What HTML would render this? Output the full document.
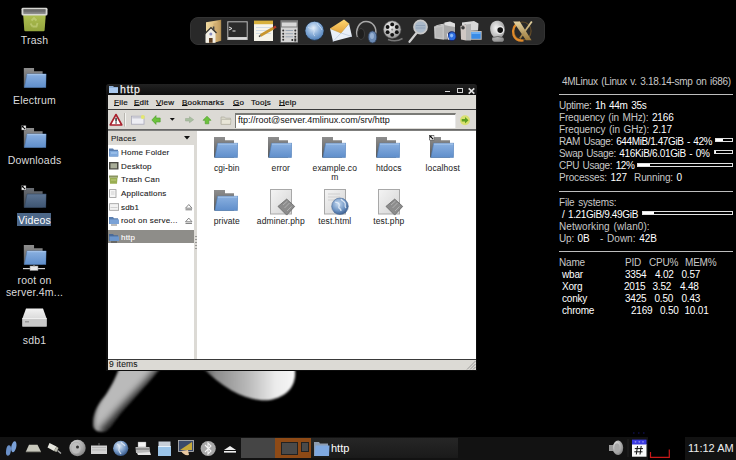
<!DOCTYPE html>
<html><head><meta charset="utf-8">
<style>
*{margin:0;padding:0;box-sizing:border-box}
html,body{width:736px;height:460px;overflow:hidden;background:#000;font-family:"Liberation Sans",sans-serif}
.a{position:absolute}
svg{position:absolute;overflow:visible}
/* desktop labels */
.dl{position:absolute;color:#dcdcdc;font-size:10.5px;line-height:12px;letter-spacing:0.2px;text-align:center;white-space:nowrap;text-shadow:1px 1px 1px #000}
/* conky */
.ck{position:absolute;font-size:10px;line-height:12px;color:#c8c8c8;white-space:nowrap;letter-spacing:-0.2px;word-spacing:1px}
.ck b{font-weight:normal;color:#fff}
.hr{position:absolute;left:559px;width:174px;height:1px;background:#bdbdbd}
.bar{position:absolute;height:4px;border:1px solid #e0e0e0}
.bar i{position:absolute;left:0;top:0;bottom:0;background:#fff}
/* window */
.win{position:absolute;left:106px;top:84px;width:371px;height:287px;background:#000}
.mt{position:absolute;font-size:8px;line-height:10px;color:#111;white-space:nowrap;letter-spacing:0.25px;-webkit-text-stroke:0.2px #111}
.mt u{text-decoration:underline;text-underline-offset:0px;text-decoration-thickness:1px}
.sb{position:absolute;font-size:8px;color:#1a1a1a;white-space:nowrap;letter-spacing:0.2px;-webkit-text-stroke:0.1px}
.fi{position:absolute;font-size:8.5px;line-height:9px;color:#2a2a2a;letter-spacing:0.1px;-webkit-text-stroke:0.05px;white-space:nowrap;text-align:center}
</style></head><body>

<!-- wallpaper shapes -->
<svg class="a" style="left:0;top:0" width="736" height="460" viewBox="0 0 736 460">
  <defs>
    <linearGradient id="lg1" gradientUnits="userSpaceOnUse" x1="104" y1="390" x2="134" y2="410">
      <stop offset="0" stop-color="#383838"/>
      <stop offset="0.2" stop-color="#909090"/>
      <stop offset="0.55" stop-color="#ababab"/>
      <stop offset="0.85" stop-color="#8a8a8a"/>
      <stop offset="1" stop-color="#2a2a2a"/>
    </linearGradient>
    <linearGradient id="lg1v" gradientUnits="userSpaceOnUse" x1="0" y1="371" x2="0" y2="430">
      <stop offset="0" stop-color="#fff" stop-opacity="1"/>
      <stop offset="0.6" stop-color="#fff" stop-opacity="0.92"/>
      <stop offset="1" stop-color="#fff" stop-opacity="0.7"/>
    </linearGradient>
    <mask id="m1"><rect x="0" y="360" width="300" height="80" fill="url(#lg1v)"/></mask>
    <linearGradient id="lg2" gradientUnits="userSpaceOnUse" x1="203" y1="380" x2="294" y2="380">
      <stop offset="0" stop-color="#505050"/>
      <stop offset="0.14" stop-color="#8c8c8c"/>
      <stop offset="0.5" stop-color="#bababa"/>
      <stop offset="0.8" stop-color="#ececec"/>
      <stop offset="1" stop-color="#f6f6f6"/>
    </linearGradient>
    <filter id="bl1" x="-20%" y="-20%" width="140%" height="140%"><feGaussianBlur stdDeviation="0.8"/></filter>
    <filter id="bl2" x="-20%" y="-20%" width="140%" height="140%"><feGaussianBlur stdDeviation="0.9"/></filter>
  </defs>
  <clipPath id="legc"><path d="M120 366 L162 366 C148 384 132 400 120 414 C114 422 110 428 106 431 C99 433 93 431 93 424 C93 414 97 405 104 397 C110 389 115 379 120 366 Z"/></clipPath>
  <filter id="bl4" x="-50%" y="-50%" width="200%" height="200%"><feGaussianBlur stdDeviation="3.5"/></filter>
  <filter id="bl3" x="-50%" y="-50%" width="200%" height="200%"><feGaussianBlur stdDeviation="1.8"/></filter>
  <g filter="url(#bl1)"><g clip-path="url(#legc)">
    <rect x="80" y="360" width="90" height="80" fill="#bababa"/>
    <path d="M168 370 C152 390 134 406 122 420 C115 428 110 434 104 438" stroke="#000" stroke-width="20" fill="none" opacity="0.8" filter="url(#bl4)"/>
    <path d="M119 364 C113 380 106 392 100 400 C95 408 92 418 94 432" stroke="#000" stroke-width="3" fill="none" opacity="0.45" filter="url(#bl3)"/>
    <path d="M90 436 L120 436" stroke="#000" stroke-width="8" opacity="0.5" filter="url(#bl3)"/>
  </g></g>
  <path d="M201 366 L294.5 366 C297.5 382 291 396 270 400 C250 402 226 392 201 366 Z" fill="url(#lg2)" filter="url(#bl2)"/>
</svg>


<svg width="0" height="0" style="position:absolute">
<defs>
  <linearGradient id="fb" x1="0" y1="0" x2="0" y2="1"><stop offset="0" stop-color="#8e8e8e"/><stop offset="1" stop-color="#585858"/></linearGradient>
  <linearGradient id="ff" x1="0" y1="0" x2="0" y2="1"><stop offset="0" stop-color="#8ab0e0"/><stop offset="1" stop-color="#5f8ecb"/></linearGradient>
  <linearGradient id="ffd" x1="0" y1="0" x2="0" y2="1"><stop offset="0" stop-color="#5d7594"/><stop offset="1" stop-color="#3e5572"/></linearGradient>
  <linearGradient id="fbd" x1="0" y1="0" x2="0" y2="1"><stop offset="0" stop-color="#6a6e74"/><stop offset="1" stop-color="#40444a"/></linearGradient>
  <symbol id="folder" viewBox="0 0 24 21">
    <path d="M0 0H11V3.3H20V20.6H0Z" fill="url(#fb)"/>
    <path d="M3.6 6.3H24L23.4 20.6H0.9Z" fill="url(#ff)" stroke="#4b7ab5" stroke-width="0.6"/>
    <path d="M3.8 7H23.3" stroke="#b9d4f4" stroke-width="0.8"/>
  </symbol>
  <symbol id="folderd" viewBox="0 0 24 21">
    <path d="M0 0H11V3.3H20V20.6H0Z" fill="url(#fbd)"/>
    <path d="M3.6 6.3H24L23.4 20.6H0.9Z" fill="url(#ffd)" stroke="#33475f" stroke-width="0.6"/>
  </symbol>
  <symbol id="link" viewBox="0 0 6 6">
    <rect x="0.3" y="0.3" width="5.4" height="5.4" fill="#f2f2f2" stroke="#222" stroke-width="0.6"/>
    <path d="M0.9 0.9H3.4L0.9 3.4Z" fill="#000"/>
    <path d="M1.8 1.8L4.6 4.6" stroke="#000" stroke-width="1.2"/>
  </symbol>
  <linearGradient id="tg" x1="0" y1="0" x2="0" y2="1"><stop offset="0" stop-color="#aebf52"/><stop offset="1" stop-color="#93a43c"/></linearGradient>
  <linearGradient id="dg" x1="0" y1="0" x2="0" y2="1"><stop offset="0" stop-color="#f2f2f2"/><stop offset="1" stop-color="#c8c8c8"/></linearGradient>
  <linearGradient id="pg" x1="0" y1="0" x2="1" y2="1"><stop offset="0" stop-color="#f4f4f4"/><stop offset="1" stop-color="#d4d4d4"/></linearGradient>
  <radialGradient id="gl" cx="0.4" cy="0.35" r="0.7"><stop offset="0" stop-color="#c8dcf2"/><stop offset="0.6" stop-color="#6f95c4"/><stop offset="1" stop-color="#37598a"/></radialGradient>

  <symbol id="page" viewBox="0 0 26 27">
    <rect x="0.5" y="0.5" width="21" height="24.5" fill="url(#pg)" stroke="#a8a8a8" stroke-width="1"/>
  </symbol>
  <symbol id="php" viewBox="0 0 26 27">
    <use href="#page"/>
    <path d="M16.7 10.1L24.7 17.4L16.7 26.1L8 17.4Z" fill="#8c8c8c" stroke="#666" stroke-width="0.8"/>
    <path d="M13 16l4.5-4M14.5 19l5-5M17 22l4.5-4.5" stroke="#b4b4b4" stroke-width="0.9"/>
  </symbol>
  <symbol id="html" viewBox="0 0 26 27">
    <use href="#page"/>
    <path d="M4 5h12M4 8h12M4 11h8" stroke="#cfcfcf" stroke-width="1"/>
    <circle cx="16" cy="17.3" r="8.3" fill="url(#gl)" stroke="#4a6a96" stroke-width="0.6"/>
    <path d="M11 13c2 1 3 0 4 2s-1 3 0 4 2 1 2 3M17 10c1 2 3 2 4 4s-1 3 1 5" stroke="#e9f1fa" stroke-width="1.3" fill="none" opacity="0.85"/>
  </symbol>
</defs>
</svg>

<!-- desktop icons -->
<svg style="left:21px;top:7px" width="27" height="25" viewBox="0 0 27 25">
  <defs><linearGradient id="tri" x1="0" y1="0" x2="0" y2="1"><stop offset="0" stop-color="#4a4a4a"/><stop offset="1" stop-color="#8a8a8a"/></linearGradient></defs>
  <path d="M2.2 8H24.8L23.6 23.2Q23.5 24.2 22.5 24.2H4.4Q3.4 24.2 3.3 23.2Z" fill="url(#tg)"/>
  <path d="M10.5 13.5l2.5-2.5 2.5 2.5M16.5 16l-1 3.5h-4M9.5 16.5l2 3" stroke="#cdd98a" stroke-width="1.8" fill="none" opacity="0.55"/>
  <path d="M0.5 2.2Q0.5 0.8 2 0.8H25Q26.5 0.8 26.5 2.2V7Q26.5 8.6 25 8.6H2Q0.5 8.6 0.5 7Z" fill="#d6d6d2"/>
  <rect x="2.4" y="2.3" width="22.2" height="4.6" fill="url(#tri)"/>
  <path d="M3 3.8H24M3 5.3H24" stroke="#9a9a9a" stroke-width="0.4"/>
</svg>
<div class="dl" style="left:4px;top:34px;width:61px">Trash</div>

<svg style="left:22.5px;top:67.5px" width="24" height="20" viewBox="0 0 24 21"><use href="#folder"/></svg>
<div class="dl" style="left:4px;top:94px;width:61px">Electrum</div>

<svg style="left:22.5px;top:127.5px" width="24" height="20" viewBox="0 0 24 21"><use href="#folder"/></svg>
<svg style="left:20.8px;top:124.8px" width="5.4" height="5.4" viewBox="0 0 6 6"><use href="#link"/></svg>
<div class="dl" style="left:4px;top:154px;width:61px">Downloads</div>

<svg style="left:22.5px;top:187.5px" width="24" height="20" viewBox="0 0 24 21"><use href="#folderd"/></svg>
<svg style="left:20.8px;top:184.8px" width="5.4" height="5.4" viewBox="0 0 6 6"><use href="#link"/></svg>
<div class="a" style="left:17px;top:212.5px;width:34px;height:13.5px;background:#4c6788"></div>
<div class="dl" style="left:4px;top:214px;width:61px;color:#fff;text-shadow:none">Videos</div>

<svg style="left:23px;top:245px" width="24" height="20" viewBox="0 0 24 21"><use href="#folder"/></svg>
<svg style="left:23px;top:265px" width="22" height="6" viewBox="0 0 22 6">
  <rect x="0" y="3" width="22" height="1.2" fill="#d0d0d0"/>
  <rect x="7" y="1" width="8" height="4.5" fill="#e8e8e8" stroke="#888" stroke-width="0.5"/>
  <rect x="10.5" y="0" width="1" height="2" fill="#aaa"/>
</svg>
<div class="dl" style="left:4px;top:274px;width:61px">root on</div>
<div class="dl" style="left:4px;top:286px;width:61px">server.4m...</div>

<svg style="left:22px;top:308px" width="25" height="19" viewBox="0 0 25 19">
  <path d="M4 0.5H21L24.6 10.5V18.5H0.4V10.5Z" fill="url(#dg)"/>
  <rect x="0.4" y="10.5" width="24.2" height="8" fill="#c9c9c9"/>
  <rect x="0.4" y="10" width="24.2" height="1" fill="#eee"/>
  <rect x="3" y="13" width="4" height="1.5" fill="#999"/>
</svg>
<div class="dl" style="left:4px;top:334px;width:61px">sdb1</div>

<!-- dock -->
<div class="a" style="left:190px;top:17px;width:355px;height:28px;background:#292929;border:1px solid #333;border-radius:8px"></div>


<svg style="left:0;top:0" width="736" height="60" viewBox="0 0 736 60">
  <defs>
    <linearGradient id="hm" x1="0" y1="0" x2="1" y2="0"><stop offset="0" stop-color="#f0d9a0"/><stop offset="0.7" stop-color="#d9b677"/><stop offset="1" stop-color="#a88648"/></linearGradient>
    <radialGradient id="gb" cx="0.45" cy="0.35" r="0.65"><stop offset="0" stop-color="#e4eef8"/><stop offset="0.5" stop-color="#8fb3dc"/><stop offset="1" stop-color="#4f7fb8"/></radialGradient>
    <linearGradient id="ml" x1="0" y1="0" x2="0" y2="1"><stop offset="0" stop-color="#ffd873"/><stop offset="1" stop-color="#e5a23a"/></linearGradient>
    <radialGradient id="rl" cx="0.4" cy="0.35" r="0.7"><stop offset="0" stop-color="#f4f4f4"/><stop offset="1" stop-color="#8e8e8e"/></radialGradient>
    <linearGradient id="cm" x1="0" y1="0" x2="0" y2="1"><stop offset="0" stop-color="#e6e6e6"/><stop offset="1" stop-color="#9a9a9a"/></linearGradient>
    <linearGradient id="xg" x1="0" y1="0" x2="0" y2="1"><stop offset="0" stop-color="#e4d3a2"/><stop offset="1" stop-color="#9c7a3c"/></linearGradient>
  </defs>
  <!-- home -->
  <path d="M206 22.2L221.2 19.8V40.8L214 42.8H206Z" fill="url(#hm)"/>
  <path d="M213.5 23.5L220.5 21.2V40.2L213.5 42.5Z" fill="#c9a56a" opacity="0.6"/>
  <path d="M205.5 34L211 28.5L215.5 33V42.8H205.5Z" fill="#f2efe6"/>
  <path d="M204.3 34.3L211 27.6L216.5 33" stroke="#333" stroke-width="1.3" fill="none"/>
  <rect x="212.8" y="26.5" width="1.6" height="4" fill="#444"/>
  <circle cx="210.8" cy="34" r="1.5" fill="#8b8fc0"/>
  <path d="M209 42.8V38H212.6V42.8Z" fill="#5e3e22"/>
  <!-- terminal -->
  <rect x="227.3" y="21.3" width="20.4" height="18.7" fill="#bdbdbd"/>
  <rect x="228.3" y="22.3" width="18.4" height="14.7" fill="#2b2b2b"/>
  <rect x="228.3" y="37.3" width="18.4" height="2" fill="#dcdcdc"/>
  <path d="M229 27L232 28.5L229 30" stroke="#e6e6e6" stroke-width="1" fill="none"/>
  <rect x="232.5" y="30.5" width="3" height="1" fill="#e6e6e6"/>
  <!-- notepad -->
  <rect x="254" y="22" width="19" height="19" fill="#f6f4ea"/>
  <rect x="254" y="20.6" width="19" height="3.6" fill="#d8b13c"/>
  <path d="M256 27.5H271M256 30.5H271M256 33.5H271" stroke="#b8cbe0" stroke-width="0.6"/>
  <path d="M260.5 35.5L273.5 28" stroke="#c8962f" stroke-width="2.6"/>
  <path d="M273.5 28L276 26.5" stroke="#b33a2a" stroke-width="2.4"/>
  <path d="M260.5 35.5L259 36.6" stroke="#444" stroke-width="1.5"/>
  <!-- calculator -->
  <rect x="280.4" y="20.2" width="17.6" height="22.5" fill="#7e7e7e"/>
  <rect x="281.8" y="22.5" width="14.8" height="4" fill="#d8d8d8"/>
  <rect x="281" y="27.5" width="16.4" height="14.5" fill="#d4d4d4"/>
  <g fill="#333"><circle cx="283.2" cy="30.5" r="1"/><circle cx="283.2" cy="33.7" r="1"/><circle cx="283.2" cy="36.8" r="1"/><circle cx="283.2" cy="39.8" r="1"/><circle cx="295.3" cy="30.5" r="1"/><circle cx="295.3" cy="33.7" r="1"/><circle cx="295.3" cy="36.8" r="1"/><rect x="294.3" y="38.5" width="2" height="3"/><rect x="291.5" y="39" width="1.6" height="2"/></g>
  <g fill="#9aa6b4"><rect x="285.5" y="30" width="7.5" height="1"/><rect x="285.5" y="33.2" width="7.5" height="1"/><rect x="285.5" y="36.3" width="7.5" height="1"/></g>
  <!-- globe -->
  <circle cx="314.5" cy="30.8" r="9.6" fill="url(#gb)" stroke="#1b2430" stroke-width="0.8"/>
  <path d="M308 27c2 2 5 1 6 3s-2 4 1 6M317 23c1 3 4 4 5 7" stroke="#d6e6f6" stroke-width="1" fill="none" opacity="0.7"/>
  <!-- mail -->
  <path d="M330 28.5L349 23.5L352 36.5L333 41.5Z" fill="#e9eff8"/>
  <path d="M330 28.5L344 19.5L349 23.5L341 33Z" fill="url(#ml)"/>
  <path d="M333 41.5L341 33L352 36.5" stroke="#b8c6da" stroke-width="0.7" fill="none"/>
  <path d="M330 28.5L341 33L349 23.5" stroke="#c59a3a" stroke-width="0.6" fill="none"/>
  <!-- headphones -->
  <path d="M357.5 37C355 30 359 21.5 366 21.5S377 28 375.5 34" stroke="#a8a8a8" stroke-width="1.5" fill="none"/>
  <ellipse cx="361" cy="34" rx="3.5" ry="5.5" fill="#1e1e1e" stroke="#555" stroke-width="0.5"/>
  <ellipse cx="372.5" cy="37" rx="4.3" ry="6" fill="#6b8ab4" stroke="#2d3e58" stroke-width="0.8"/>
  <ellipse cx="372" cy="36" rx="2" ry="3" fill="#a8c0de" opacity="0.7"/>
  <!-- reel -->
  <path d="M388 39.5Q396 42.5 402.5 38.5" stroke="#777" stroke-width="1.5" fill="none"/>
  <circle cx="392.2" cy="29.6" r="8.8" fill="url(#rl)" stroke="#555" stroke-width="0.5"/>
  <g fill="#111"><circle cx="392.2" cy="24.4" r="1.9"/><circle cx="396.8" cy="27" r="1.9"/><circle cx="396.8" cy="32.2" r="1.9"/><circle cx="392.2" cy="34.8" r="1.9"/><circle cx="387.6" cy="32.2" r="1.9"/><circle cx="387.6" cy="27" r="1.9"/></g>
  <circle cx="392.2" cy="29.6" r="1.1" fill="#888"/>
  <!-- magnifier -->
  <path d="M416.5 33L409.5 41.8" stroke="#cfcfcf" stroke-width="2.2" stroke-linecap="round"/>
  <circle cx="420.5" cy="27" r="6.6" fill="#a9b8c8" stroke="#c8c8c8" stroke-width="1.6"/>
  <path d="M416 25.5H425M416 28H425" stroke="#8a9cb2" stroke-width="0.8"/>
  <!-- camera -->
  <path d="M434 26.5L444 24.5V39.8L434.5 38.5Z" fill="#c4c4c4"/>
  <path d="M434 26.5L437.5 25L447 23L444 24.5Z" fill="#e8e8e8"/>
  <path d="M444 24.5L447 23L455 25V33L447.5 39.5H444Z" fill="#a8a8a8"/>
  <path d="M444.5 22.5L450 21.5L455 23.5V27L449 26L444.5 25Z" fill="#dedede"/>
  <path d="M435.5 28L442.5 26.8V38L436 37.2Z" fill="#b0b0b0" opacity="0.6"/>
  <ellipse cx="451.8" cy="36.2" rx="4.6" ry="5" fill="#14246a"/>
  <ellipse cx="452" cy="36.2" rx="3.5" ry="3.9" fill="#2d6ee0"/>
  <ellipse cx="451.6" cy="35.6" rx="1.6" ry="1.8" fill="#8cbaf8"/>
  <path d="M447.5 33.5Q447 37 449 40" stroke="#f0f0f0" stroke-width="1" fill="none"/>
  <!-- video camera -->
  <path d="M460.5 26L466 24.5V40.6L461 39.5Z" fill="#d0c8c4"/>
  <path d="M462 22.5L474 21L478.5 23.5L478 30.5L466 31V24.5L462 25.5Z" fill="#d8d8d8"/>
  <path d="M466 24.5L471 24V40.6H466Z" fill="#b4b4b4"/>
  <circle cx="463" cy="27.8" r="1.8" fill="#3a3a3a"/>
  <rect x="470.3" y="31" width="11.4" height="8.8" fill="#bdbdbd"/>
  <rect x="471.3" y="32" width="9.4" height="6.8" fill="#3b8ce6"/>
  <rect x="471.3" y="32" width="9.4" height="2" fill="#6fb0f4"/>
  <!-- webcam -->
  <path d="M497 20.8C492 21 489.5 25.5 490.3 30.5C490.8 34 492.5 35.5 493.5 36.5C491.5 38 491.5 41 494.5 41.8H502.5C504.5 41 504.5 38 502 36.8C504.5 34.5 505 31 504.6 27.5C504 23.5 501.5 20.8 497 20.8Z" fill="url(#rl)"/>
  <circle cx="500" cy="30" r="4.3" fill="#e8e8e8"/>
  <circle cx="500.2" cy="30.1" r="2.8" fill="#111"/>
  <path d="M492.5 37.5Q498 35.5 503 37.5" stroke="#555" stroke-width="0.8" fill="none"/>
  <!-- X -->
  <ellipse cx="522.5" cy="31" rx="8.6" ry="9" fill="none" stroke="#7a5a28" stroke-width="1.2" opacity="0.7"/>
  <path d="M520 22.5C514 24 512 30 513.5 35C515 39 519 41 523.5 40.5" stroke="#e08a2a" stroke-width="2.2" fill="none"/>
  <path d="M513.2 21.6H519.8L531.5 40.3H526Z" fill="url(#xg)"/>
  <path d="M531.8 21.6L519.8 38.5" stroke="url(#xg)" stroke-width="1.8"/>
</svg>

<!-- taskbar -->
<div class="a" style="left:0;top:437px;width:736px;height:23px;background:#121212"></div>
<div class="a" style="left:241px;top:438px;width:34px;height:20px;background:#454545"></div>
<div class="a" style="left:275px;top:438px;width:36px;height:20px;background:#8e4a16"></div>
<div class="a" style="left:281px;top:442px;width:17px;height:13px;background:#4a4a4a;border:1px solid #222"></div>
<div class="a" style="left:301px;top:442px;width:8px;height:10px;background:#4a4a4a;border:1px solid #222"></div>
<div class="a" style="left:311px;top:438px;width:147px;height:20px;background:linear-gradient(#262626,#1a1a1a)"></div>
<div class="a" style="left:331px;top:441px;font-size:11px;color:#fff;line-height:14px">http</div>
<div class="a" style="left:648px;top:437px;width:37px;height:23px;background:#000"></div>
<div class="a" style="left:688px;top:441px;font-size:11px;color:#eee;line-height:14px">11:12 AM</div>


<!-- ===== window ===== -->
<div class="a" style="left:106px;top:84px;width:371px;height:12px;background:linear-gradient(#222,#0c0c0c);border-radius:3px 3px 0 0"></div>
<div class="a" style="left:106px;top:95px;width:371px;height:276px;background:#0d0d0d"></div>
<div class="a" style="left:120px;top:83px;font-size:10.5px;line-height:12px;color:#f0f0f0;letter-spacing:0.8px;-webkit-text-stroke:0.25px">http</div>
<!-- title icon -->
<svg style="left:109px;top:86px" width="9" height="7" viewBox="0 0 9 7"><path d="M0 0h4l1 1h4v6H0z" fill="#8fb0d8"/><path d="M0 2h9v5H0z" fill="#a9c8ee"/></svg>
<!-- controls -->
<div class="a" style="left:445px;top:90.8px;width:5px;height:1.5px;background:#d8d8d8"></div>
<div class="a" style="left:456.5px;top:87.5px;width:6px;height:5.5px;border:1px solid #d0d0d0;border-top-width:1.5px"></div>
<svg style="left:467.5px;top:87.5px" width="7" height="6" viewBox="0 0 7 6"><path d="M0.7 0.4L6.3 5.6M6.3 0.4L0.7 5.6" stroke="#e0e0e0" stroke-width="1.6"/></svg>

<!-- menu bar -->
<div class="a" style="left:108px;top:95px;width:368px;height:14px;background:#dcdad5"></div>
<div class="a" style="left:108px;top:109px;width:368px;height:1px;background:#3a3a3a"></div>
<div class="mt" style="left:114px;top:98px"><u>F</u>ile</div>
<div class="mt" style="left:134px;top:98px"><u>E</u>dit</div>
<div class="mt" style="left:156px;top:98px"><u>V</u>iew</div>
<div class="mt" style="left:182px;top:98px"><u>B</u>ookmarks</div>
<div class="mt" style="left:233px;top:98px"><u>G</u>o</div>
<div class="mt" style="left:251px;top:98px">Too<u>l</u>s</div>
<div class="mt" style="left:279px;top:98px"><u>H</u>elp</div>

<!-- toolbar -->
<div class="a" style="left:108px;top:110px;width:368px;height:19px;background:#dcdad5"></div>
<div class="a" style="left:108px;top:129px;width:368px;height:2px;background:linear-gradient(#5e5e5e,#8a8a88)"></div>
<div class="a" style="left:235px;top:113px;width:221px;height:15px;background:#fff;border-top:2px solid #7a7a76;border-left:1px solid #7a7a76;border-right:1px solid #e8e8e8"></div>
<div class="a" style="left:238px;top:114.5px;font-size:9px;line-height:11px;color:#111">ftp://root@server.4mlinux.com/srv/http</div>

<!-- sidebar -->
<div class="a" style="left:108px;top:131px;width:86px;height:14px;background:#dcdad5"></div>
<div class="sb" style="left:111px;top:134px">Places</div>
<svg style="left:184px;top:136px" width="6" height="4" viewBox="0 0 6 4"><path d="M0 0h6L3 3.5z" fill="#111"/></svg>
<div class="a" style="left:108px;top:145px;width:86px;height:214px;background:#fff"></div>
<div class="a" style="left:194px;top:131px;width:3px;height:228px;background:#dcdad5"></div>
<div class="a" style="left:108px;top:230px;width:86px;height:13px;background:#8e8d89"></div>
<div class="sb" style="left:121px;top:148px">Home Folder</div>
<div class="sb" style="left:121px;top:162px">Desktop</div>
<div class="sb" style="left:121px;top:175px">Trash Can</div>
<div class="sb" style="left:121px;top:189px">Applications</div>
<div class="sb" style="left:121px;top:203px">sdb1</div>
<div class="sb" style="left:121px;top:216px">root on serve...</div>
<div class="sb" style="left:121px;top:233px;color:#fff">http</div>

<!-- main view -->
<div class="a" style="left:197px;top:131px;width:279px;height:228px;background:#fff"></div>
<!-- sidebar + toolbar icons -->
<svg style="left:0;top:0" width="736" height="460" viewBox="0 0 736 460">
  <!-- home folder -->
  <path d="M109 148.5H113L114 149.8H118V156.5H109Z" fill="#5b7fb0"/>
  <path d="M109.5 151H118.5V156.5H109.5Z" fill="#7fa9dc"/>
  <path d="M111 153H117" stroke="#b0d0f4" stroke-width="1"/>
  <!-- desktop -->
  <rect x="109" y="162" width="9.5" height="7.5" fill="#4a4a44"/>
  <rect x="110.5" y="163.3" width="6.5" height="5" fill="#a8ad98"/>
  <!-- trash -->
  <rect x="109" y="175.5" width="9" height="2.2" fill="#8a9460"/>
  <path d="M109.5 177.7H117.5L117 183.8H110Z" fill="#9aae52"/>
  <path d="M111 180H116" stroke="#c8d68a" stroke-width="0.8"/>
  <!-- applications -->
  <rect x="109.6" y="189.6" width="6.4" height="7.8" fill="#f6f6f6" stroke="#9a9a9a" stroke-width="0.8"/>
  <path d="M111 192H114.5M111 194H114.5" stroke="#bbb" stroke-width="0.6"/>
  <!-- sdb1 -->
  <rect x="109.6" y="203.7" width="9" height="6.6" fill="#f2f2f2" stroke="#9a9a9a" stroke-width="0.8"/>
  <path d="M110.5 207.5H117.5" stroke="#b8b8b8" stroke-width="0.6"/>
  <!-- network folder -->
  <path d="M109 217H113L114 218.2H118V224H109Z" fill="#5b7fb0"/>
  <path d="M109.5 219.4H119V224H109.5Z" fill="#7aa2d6"/>
  <path d="M111 225H117" stroke="#555" stroke-width="0.8"/>
  <!-- http folder (selected) -->
  <path d="M109 234H113L114 235.2H118V241H109Z" fill="#4a6a98"/>
  <path d="M109.5 236.4H119V241H109.5Z" fill="#6c96cc"/>
  <path d="M111 242H117" stroke="#333" stroke-width="0.8"/>
  <!-- eject icons -->
  <path d="M185.5 208.2L188.8 204.5L192 208.2Z" fill="none" stroke="#777" stroke-width="0.9"/>
  <path d="M185.5 209.8H192" stroke="#777" stroke-width="1"/>
  <path d="M185.5 221.8L188.8 218.1L192 221.8Z" fill="none" stroke="#777" stroke-width="0.9"/>
  <path d="M185.5 223.4H192" stroke="#777" stroke-width="1"/>
  <!-- pane handle dots -->
  <g fill="#555"><rect x="195.5" y="236" width="1" height="1"/><rect x="195.5" y="239" width="1" height="1"/><rect x="195.5" y="242" width="1" height="1"/><rect x="195.5" y="245" width="1" height="1"/><rect x="195.5" y="248" width="1" height="1"/></g>

  <!-- toolbar: warning -->
  <path d="M116 114.5L121.8 125H110.2Z" fill="#fff" stroke="#a8202c" stroke-width="1.6" stroke-linejoin="round"/>
  <rect x="115.4" y="117.8" width="1.3" height="3.8" fill="#111"/>
  <rect x="115.4" y="122.3" width="1.3" height="1.3" fill="#111"/>
  <!-- separator -->
  <path d="M124.5 113V126.5" stroke="#b8b6b0" stroke-width="1"/>
  <path d="M125.5 113V126.5" stroke="#f4f3f0" stroke-width="1"/>
  <!-- new window -->
  <rect x="131.5" y="116.2" width="12.5" height="8" fill="#eeeef4" stroke="#a8a8b8" stroke-width="0.8"/>
  <rect x="132.3" y="116.9" width="11" height="1.6" fill="#c9c9d4"/>
  <circle cx="142.8" cy="117" r="2" fill="#e4e870"/>
  <!-- back arrow -->
  <path d="M151.8 120L156 115.6V118H160.2V122H156V124.4Z" fill="#6cc23c" stroke="#4a9a28" stroke-width="0.6"/>
  <!-- dropdown -->
  <path d="M169.8 118H174.8L172.3 120.8Z" fill="#111"/>
  <!-- forward arrow (disabled) -->
  <path d="M193.7 119.7L189.5 116.7V118.5H185.5V121H189.5V122.7Z" fill="#a9bfa0" stroke="#93a78b" stroke-width="0.5"/>
  <!-- up arrow -->
  <path d="M207 116.2L211 120.3H208.8V123.8H205.2V120.3H203Z" fill="#6cc23c" stroke="#4a9a28" stroke-width="0.6"/>
  <!-- folder (disabled) -->
  <path d="M221 117H224.5L225.5 118.2H230.5V124.3H221Z" fill="#d8d6c8" stroke="#a8a698" stroke-width="0.6"/>
  <path d="M221.5 119.5H231L230.5 124.3H221.2Z" fill="#e8e6d8" stroke="#a8a698" stroke-width="0.5"/>
  <!-- go button -->
  <circle cx="465" cy="120.3" r="5" fill="#d8e070"/>
  <path d="M468.5 120.3L465 117V119H461.7V121.6H465V123.6Z" fill="#5fa020"/>
  <!-- status grip -->
</svg>



<!-- file icons -->
<svg style="left:214px;top:137px" width="24" height="21" viewBox="0 0 24 21"><use href="#folder"/></svg>
<svg style="left:268px;top:137px" width="24" height="21" viewBox="0 0 24 21"><use href="#folder"/></svg>
<svg style="left:322px;top:137px" width="24" height="21" viewBox="0 0 24 21"><use href="#folder"/></svg>
<svg style="left:376px;top:137px" width="24" height="21" viewBox="0 0 24 21"><use href="#folder"/></svg>
<svg style="left:430px;top:137px" width="24" height="21" viewBox="0 0 24 21"><use href="#folder"/></svg>
<svg style="left:429px;top:134.5px" width="5.4" height="5.4" viewBox="0 0 6 6"><use href="#link"/></svg>
<svg style="left:214px;top:189.5px" width="24" height="21" viewBox="0 0 24 21"><use href="#folder"/></svg>
<svg style="left:269.5px;top:188.5px" width="26" height="27" viewBox="0 0 26 27"><use href="#php"/></svg>
<svg style="left:323.5px;top:188.5px" width="26" height="27" viewBox="0 0 26 27"><use href="#html"/></svg>
<svg style="left:377.5px;top:188.5px" width="26" height="27" viewBox="0 0 26 27"><use href="#php"/></svg>
<div class="fi" style="left:196.8px;top:163.5px;width:60px">cgi-bin</div>
<div class="fi" style="left:250.8px;top:163.5px;width:60px">error</div>
<div class="fi" style="left:304.8px;top:163.5px;width:60px">example.co<br>m</div>
<div class="fi" style="left:358.8px;top:163.5px;width:60px">htdocs</div>
<div class="fi" style="left:412.8px;top:163.5px;width:60px">localhost</div>
<div class="fi" style="left:196.8px;top:216.5px;width:60px">private</div>
<div class="fi" style="left:250.8px;top:216.5px;width:60px">adminer.php</div>
<div class="fi" style="left:304.8px;top:216.5px;width:60px">test.html</div>
<div class="fi" style="left:358.8px;top:216.5px;width:60px">test.php</div>

<!-- status bar -->
<div class="a" style="left:108px;top:359px;width:368px;height:1px;background:#3a3a3a"></div>
<div class="a" style="left:108px;top:360px;width:368px;height:10px;background:#dcdad5"></div>
<div class="a" style="left:109px;top:359px;font-size:8.5px;line-height:11px;color:#1a1a1a;letter-spacing:0.2px;-webkit-text-stroke:0.1px">9 items</div>
<svg style="left:0;top:0" width="736" height="460" viewBox="0 0 736 460">  <path d="M467 369.5L475.5 361M470 369.5L475.5 364M473 369.5L475.5 367" stroke="#888" stroke-width="0.8"/>
</svg>


<svg style="left:0;top:430px" width="736" height="30" viewBox="0 430 736 30">
  <defs>
    <radialGradient id="sp" cx="0.35" cy="0.35" r="0.75"><stop offset="0" stop-color="#f0f0f0"/><stop offset="1" stop-color="#7a7a7a"/></radialGradient>
    <radialGradient id="gw" cx="0.4" cy="0.35" r="0.7"><stop offset="0" stop-color="#dde8f4"/><stop offset="0.6" stop-color="#6f93c2"/><stop offset="1" stop-color="#2f4f7e"/></radialGradient>
  </defs>
  <!-- feet -->
  <ellipse cx="8.5" cy="450.5" rx="2.4" ry="5.2" fill="#6a90c8" transform="rotate(8 8.5 450.5)"/>
  <ellipse cx="13.8" cy="446.8" rx="2.5" ry="5.6" fill="#7ba2d8" transform="rotate(12 13.8 446.8)"/>
  <!-- drive -->
  <path d="M29 444.8H37.5L41 451.8H25.8Z" fill="#c8c8bc"/>
  <path d="M25.8 451.8H41" stroke="#8a8a80" stroke-width="0.8"/>
  <!-- usb -->
  <path d="M49.5 443L56.5 446.5L54 451L47.5 447.5Z" fill="#e8e8e0"/>
  <path d="M56.5 446.5L58.5 448L56.5 452L54 451Z" fill="#bdbdb0"/>
  <path d="M57.5 450.5L61 453.5" stroke="#aaa" stroke-width="1.4"/>
  <!-- speaker -->
  <ellipse cx="77.5" cy="448" rx="8.2" ry="8.2" fill="url(#sp)"/>
  <ellipse cx="76" cy="448" rx="5.2" ry="6" fill="#bdbdbd" stroke="#999" stroke-width="0.5"/>
  <circle cx="77.5" cy="447" r="1.5" fill="#333"/>
  <!-- keyboard -->
  <path d="M91 445.5H107V454H91Z" fill="#d2d2d2"/>
  <path d="M92 447.5H106M92 450H106" stroke="#a5a5a5" stroke-width="0.6"/>
  <path d="M99 443V445.5" stroke="#aaa" stroke-width="0.6"/>
  <!-- globe -->
  <circle cx="120.7" cy="448.3" r="7.6" fill="url(#gw)"/>
  <path d="M117 444c2 1 3 3 2 5s1 3 2 5M121 442c1 2 3 2 4 4" stroke="#e6eef8" stroke-width="1.2" fill="none" opacity="0.8"/>
  <!-- printer -->
  <path d="M138 442H146V447H138Z" fill="#f4f4f4" stroke="#888" stroke-width="0.4"/>
  <path d="M135.5 447H149.5L150 453H136Z" fill="#b8b8b8"/>
  <path d="M137 453L150 452L151 455H138Z" fill="#e6e6e6"/>
  <path d="M136 449H149" stroke="#555" stroke-width="0.8"/>
  <!-- scanner -->
  <path d="M158.5 441.5H170.5V446H158.5Z" fill="#c8cfd8"/>
  <path d="M158 446H171V456H158Z" fill="#9bc4e8"/>
  <path d="M158.5 446.5H170.5" stroke="#eaf2fa" stroke-width="1"/>
  <!-- monitor w/ hand -->
  <rect x="178.5" y="440.5" width="15" height="11" fill="#3b4a6a" stroke="#bdbdbd" stroke-width="0.8"/>
  <path d="M180 450L192 442V450Z" fill="#c6a83a"/>
  <path d="M181 451Q184 456 189 455L188 450Z" fill="#e8c8a0"/>
  <!-- bluetooth -->
  <circle cx="208.2" cy="448.5" r="7.6" fill="#a8a8a8"/>
  <path d="M205 445L211 451L208 454V443L211 446L205 452" stroke="#f4f4f4" stroke-width="1.1" fill="none"/>
  <!-- eject -->
  <path d="M230 446L236 450H224Z" fill="#f0f0f0"/>
  <rect x="224" y="451" width="12" height="1.6" fill="#f0f0f0"/>
  <!-- task folder -->
  <path d="M314 442H319L320 443.5H328V456H314Z" fill="#8d9cb0"/>
  <path d="M315.5 445.5H329.5L329 456H314.5Z" fill="#7ea8e0"/>
  <!-- tray speaker -->
  <path d="M609 445H613L619 440.5V455L613 451H609Z" fill="#9a9a9a"/>
  <ellipse cx="618" cy="447.8" rx="5.2" ry="7.3" fill="url(#sp)"/>
  <ellipse cx="617" cy="447.8" rx="2.8" ry="4.5" fill="#a8a8a8"/>
  <rect x="627.5" y="439" width="1" height="18" fill="#222"/>
  <!-- calendar -->
  <rect x="632" y="444" width="14.5" height="12.7" fill="#fafafa"/>
  <rect x="632" y="439.6" width="14.5" height="4.9" fill="#3a3ae0"/>
  <g fill="#8a8af0"><circle cx="635.5" cy="441.8" r="0.9"/><circle cx="639.3" cy="441.8" r="0.9"/><circle cx="643" cy="441.8" r="0.9"/></g>
  <path d="M637.5 446L636.3 454.5M641.2 446L640 454.5M634.8 448.6H643M634.3 451.8H642.5" stroke="#111" stroke-width="1"/>
  <g fill="#2a2ad0" opacity="0.5"><rect x="633" y="432.5" width="1.5" height="1"/><rect x="638" y="432.5" width="1.5" height="1"/><rect x="643" y="432.5" width="1.5" height="1"/></g>
  <!-- red marker -->
  <path d="M650.5 452V457.3H669.3V449.5" stroke="#c81818" stroke-width="1.2" fill="none"/>
</svg>

<!-- conky -->
<div class="ck" style="letter-spacing:-0.29px;left:562px;top:76px">4MLinux (Linux v. 3.18.14-smp on i686)</div>
<div class="hr" style="top:94px"></div>
<div class="ck" style="letter-spacing:-0.28px;left:559px;top:100px">Uptime: <b>1h 44m 35s</b></div>
<div class="ck" style="letter-spacing:-0.17px;left:559px;top:112px">Frequency (in MHz): <b>2166</b></div>
<div class="ck" style="letter-spacing:-0.1px;left:559px;top:124px">Frequency (in GHz): <b>2.17</b></div>
<div class="ck" style="letter-spacing:-0.39px;left:559px;top:136px">RAM Usage: <b>644MiB/1.47GiB - 42%</b></div>
<div class="ck" style="letter-spacing:-0.33px;left:559px;top:148px">Swap Usage: <b>416KiB/6.01GiB - 0%</b></div>
<div class="ck" style="letter-spacing:-0.34px;left:559px;top:160px">CPU Usage: <b>12%</b></div>
<div class="ck" style="letter-spacing:-0.15px;left:559px;top:172px">Processes: <b>127</b>&nbsp; Running: <b>0</b></div>
<div class="bar" style="left:715px;top:138px;width:18px"><i style="width:7px"></i></div>
<div class="bar" style="left:714px;top:150px;width:19px"><i style="width:1px"></i></div>
<div class="bar" style="left:637px;top:163px;width:96px"><i style="width:12px"></i></div>
<div class="hr" style="top:191px"></div>
<div class="ck" style="letter-spacing:-0.15px;left:559px;top:197px">File systems:</div>
<div class="ck" style="letter-spacing:-0.33px;left:562px;top:209px"><b>/ 1.21GiB/9.49GiB</b></div>
<div class="bar" style="left:642px;top:211px;width:91px"><i style="width:11px"></i></div>
<div class="ck" style="letter-spacing:0.07px;left:559px;top:221px">Networking (wlan0):</div>
<div class="ck" style="left:559px;top:233px">Up: <b>0B</b></div>
<div class="ck" style="letter-spacing:0px;left:600px;top:233px">- Down: <b>42B</b></div>
<div class="hr" style="top:251px"></div>
<div class="ck" style="left:559px;top:257px">Name</div>
<div class="ck" style="left:625px;top:257px">PID</div>
<div class="ck" style="left:649px;top:257px">CPU%</div>
<div class="ck" style="left:685px;top:257px">MEM%</div>
<div class="ck" style="left:562px;top:269px"><b>wbar</b></div>
<div class="ck" style="left:562px;top:281px"><b>Xorg</b></div>
<div class="ck" style="left:562px;top:293px"><b>conky</b></div>
<div class="ck" style="left:562px;top:305px"><b>chrome</b></div>
<div class="ck" style="left:625px;top:269px"><b>3354</b></div>
<div class="ck" style="left:624px;top:281px"><b>2015</b></div>
<div class="ck" style="left:625px;top:293px"><b>3425</b></div>
<div class="ck" style="left:631px;top:305px"><b>2169</b></div>
<div class="ck" style="left:655px;top:269px"><b>4.02</b></div>
<div class="ck" style="left:652.5px;top:281px"><b>3.52</b></div>
<div class="ck" style="left:654.5px;top:293px"><b>0.50</b></div>
<div class="ck" style="left:660px;top:305px"><b>0.50</b></div>
<div class="ck" style="left:681.5px;top:269px"><b>0.57</b></div>
<div class="ck" style="left:680px;top:281px"><b>4.48</b></div>
<div class="ck" style="left:681.5px;top:293px"><b>0.43</b></div>
<div class="ck" style="left:684.5px;top:305px"><b>10.01</b></div>


</body></html>
